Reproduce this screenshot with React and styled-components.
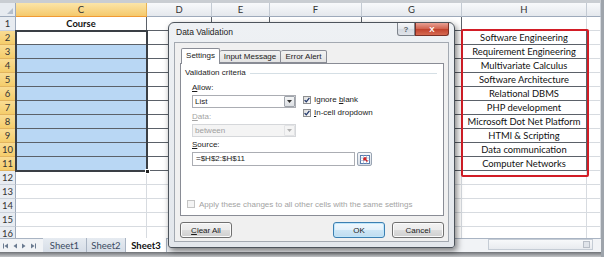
import React from 'react';
import styled, { createGlobalStyle } from 'styled-components';

const GlobalStyle = createGlobalStyle`
  html, body {
    margin: 0;
    padding: 0;
    background: #fff;
  }
  body {
    width: 604px;
    height: 257px;
    overflow: hidden;
  }
`;

const DARK = '#5b6169';
const GRID = '#d7dbe0';
const SHEET_FONT = "Lato, 'Liberation Sans', sans-serif";
const UI_FONT = "'Liberation Sans', Arial, sans-serif";

const COLS = [
  { key: 'C', w: 131 },
  { key: 'D', w: 65 },
  { key: 'E', w: 58 },
  { key: 'F', w: 92 },
  { key: 'G', w: 100 },
  { key: 'H', w: 125 },
  { key: 'I', w: 14 },
];

const COURSES = [
  'Software Engineering',
  'Requirement Engineering',
  'Multivariate Calculus',
  'Software Architecture',
  'Relational DBMS',
  'PHP development',
  'Microsoft Dot Net Platform',
  'HTMl & Scripting',
  'Data communication',
  'Computer Networks',
];

const Window = styled.div`
  position: relative;
  width: 604px;
  height: 257px;
  box-sizing: border-box;
  border-right: 3px solid #9ea4ab;
  display: flex;
  flex-direction: column;
  overflow: hidden;
  font-family: ${SHEET_FONT};
`;

const TopStrip = styled.div`
  height: 3px;
  flex: none;
  background: #c9cdd2;
`;

const SheetArea = styled.div`
  height: 235px;
  flex: none;
  overflow: hidden;
`;

const Grid = styled.div`
  display: grid;
  grid-template-columns: 16px ${COLS.map((c) => c.w + 'px').join(' ')};
  grid-auto-rows: 14px;
`;

const Corner = styled.div`
  box-sizing: border-box;
  background: #e7ebf0;
  border-right: 1px solid #9eaabb;
  border-bottom: 1px solid #9eaabb;
  display: flex;
  align-items: flex-end;
  justify-content: flex-end;
  padding: 0 2px 2px 0;
`;

const ColHead = styled.div`
  box-sizing: border-box;
  background: ${(p) =>
    p.$hl ? 'linear-gradient(#fbe5a8, #f5c96c)' : 'linear-gradient(#f8f9fb, #e4e8ed)'};
  border-right: 1px solid ${(p) => (p.$hl ? '#e7b354' : '#c3cad3')};
  border-bottom: 1px solid ${(p) => (p.$hl ? '#f09a35' : '#9eaabb')};
  color: #333;
  font-size: 9.5px;
  line-height: 13px;
  text-align: center;
`;

const RowHead = styled.div`
  box-sizing: border-box;
  background: ${(p) => (p.$hl ? 'linear-gradient(#f9dc93, #f5cd6b)' : '#e8ecf1')};
  border-right: 1px solid ${(p) => (p.$hl ? '#f0a33a' : '#9eaabb')};
  border-bottom: 1px solid ${(p) => (p.$hl ? '#e2b45e' : '#cad1da')};
  color: #333;
  font-size: 9.5px;
  line-height: 13px;
  text-align: center;
`;

const Cell = styled.div`
  box-sizing: border-box;
  background: ${(p) => (p.$fill ? '#b9d7f4' : '#fff')};
  border-right: 1px solid ${(p) => (p.$vDark ? DARK : GRID)};
  border-bottom: 1px solid ${(p) => (p.$hDark ? DARK : GRID)};
  font-weight: ${(p) => (p.$bold ? 700 : 400)};
  color: #111;
  font-size: 9.4px;
  line-height: 13px;
  text-align: center;
  white-space: nowrap;
  overflow: hidden;
`;

const SelectionFrame = styled.div`
  position: absolute;
  left: 15px;
  top: 30px;
  width: 133px;
  height: 142px;
  box-sizing: border-box;
  border: 2px solid #3a3f45;
  pointer-events: none;
`;

const FillHandle = styled.div`
  position: absolute;
  left: 145px;
  top: 169px;
  width: 5px;
  height: 5px;
  box-sizing: border-box;
  background: #222;
  border: 1px solid #fff;
`;

const RedBox = styled.div`
  position: absolute;
  left: 461px;
  top: 29px;
  width: 128px;
  height: 148px;
  box-sizing: border-box;
  border: 2px solid #d21d26;
  border-radius: 2px;
  pointer-events: none;
`;

const TabBar = styled.div`
  height: 14px;
  flex: none;
  box-sizing: border-box;
  display: flex;
  align-items: stretch;
  background: #f1f3f6;
  border-top: 1px solid #a9b4c3;
`;

const NavArrows = styled.div`
  width: 43px;
  display: flex;
  align-items: center;
  padding-left: 3px;
  box-sizing: border-box;
  gap: 3px;
`;

const SheetTab = styled.div`
  width: ${(p) => p.$w}px;
  box-sizing: border-box;
  display: flex;
  align-items: center;
  justify-content: center;
  font-size: 9.5px;
  font-weight: ${(p) => (p.$active ? 700 : 400)};
  color: ${(p) => (p.$active ? '#111' : '#3b4b62')};
  background: ${(p) => (p.$active ? '#fff' : 'linear-gradient(#e6ebf1, #d6dde7)')};
  border-right: 1px solid #a9b4c3;
  margin-top: -1px;
`;

const HScroll = styled.div`
  margin-left: auto;
  margin-right: 8px;
  width: 105px;
  height: 11px;
  box-sizing: border-box;
  border: 1px solid #c5ccd5;
  background: linear-gradient(#f7f8fa, #e8ebef);
  display: flex;
  justify-content: flex-end;
  align-items: center;
  padding-right: 2px;
`;

const Grip = styled.div`
  width: 5px;
  height: 5px;
  border: 1px solid #b8bec7;
  background: #e0e4ea;
`;

const BottomBand = styled.div`
  height: 5px;
  flex: none;
  background: linear-gradient(#6f7276, #c4c6c9);
`;

/* ---------- dialog ---------- */

const Dialog = styled.div`
  position: absolute;
  left: 168px;
  top: 22px;
  width: 287px;
  height: 226px;
  box-sizing: border-box;
  border: 1px solid #4d545c;
  border-radius: 6px 6px 3px 3px;
  background: linear-gradient(#eef1f4, #e3e7ec);
  padding: 0 5px 5px 5px;
  box-shadow: 2px 3px 6px rgba(0, 0, 0, 0.5);
  font-family: ${UI_FONT};
  display: flex;
  flex-direction: column;
`;

const TitleBar = styled.div`
  height: 19px;
  flex: none;
  display: flex;
  align-items: flex-start;
`;

const Title = styled.div`
  padding-left: 2px;
  font-size: 8.5px;
  line-height: 19px;
  color: #1b1b1b;
`;

const CaptionButtons = styled.div`
  margin-left: auto;
  display: flex;
`;

const CapBtn = styled.div`
  width: ${(p) => p.$w}px;
  height: 13px;
  box-sizing: border-box;
  display: flex;
  align-items: center;
  justify-content: center;
  border: 1px solid ${(p) => (p.$close ? '#7a3026' : '#7d838b')};
  border-top: none;
  border-radius: ${(p) => (p.$close ? '0 0 3px 0' : '0 0 0 3px')};
  background: ${(p) =>
    p.$close
      ? 'linear-gradient(#e8a093, #d0604c 50%, #c0412c 51%, #d66a52)'
      : 'linear-gradient(#f5f6f8, #e2e6eb 50%, #d4d9e0 51%, #e0e4ea)'};
  color: ${(p) => (p.$close ? '#fff' : '#5a6068')};
  font-size: 8px;
  font-weight: 700;
`;

const Body = styled.div`
  flex: 1;
  box-sizing: border-box;
  border: 1px solid #a3a9b1;
  background: #f0f0f0;
  padding: 5px 4px 3px 5px;
  display: flex;
  flex-direction: column;
`;

const Tabs = styled.div`
  height: 15px;
  display: flex;
  align-items: flex-end;
  padding-left: 1px;
  position: relative;
  z-index: 1;
`;

const Tab = styled.div`
  width: ${(p) => p.$w}px;
  height: ${(p) => (p.$active ? 16 : 13)}px;
  margin-bottom: ${(p) => (p.$active ? -1 : 0)}px;
  box-sizing: border-box;
  border: 1px solid #898c95;
  border-bottom: ${(p) => (p.$active ? 'none' : '1px solid #898c95')};
  border-left: ${(p) => (p.$first || p.$active ? '1px solid #898c95' : 'none')};
  border-radius: 2px 2px 0 0;
  background: ${(p) => (p.$active ? '#fff' : 'linear-gradient(#f2f2f2, #e3e3e3)')};
  font-size: 8px;
  color: #1b1b1b;
  display: flex;
  align-items: center;
  justify-content: center;
  padding-bottom: ${(p) => (p.$active ? 2 : 0)}px;
`;

const Panel = styled.div`
  height: 153px;
  flex: none;
  box-sizing: border-box;
  border: 1px solid #898c95;
  background: #fff;
  padding: 4px 4px 0 4px;
  display: flex;
  flex-direction: column;
  font-size: 8px;
  color: #1b1b1b;
`;

const GroupTitle = styled.div`
  display: flex;
  align-items: center;
  height: 10px;
  line-height: 10px;
`;

const GroupLine = styled.div`
  flex: 1;
  height: 1px;
  background: #d5dfe5;
  margin: 0 2px 0 4px;
`;

const Indent = styled.div`
  padding-left: 7px;
  display: flex;
  flex-direction: column;
`;

const Label = styled.div`
  height: 10px;
  line-height: 10px;
  margin-top: ${(p) => p.$mt || 0}px;
  color: ${(p) => (p.$disabled ? '#a3a3a3' : '#1b1b1b')};
`;

const FormRow = styled.div`
  display: flex;
  margin-top: 2px;
`;

const LeftCol = styled.div`
  width: 104px;
  display: flex;
  flex-direction: column;
`;

const Combo = styled.div`
  height: 13px;
  margin-top: ${(p) => p.$mt || 0}px;
  box-sizing: border-box;
  border: 1px solid ${(p) => (p.$disabled ? '#d5d7da' : '#abadb3')};
  background: ${(p) => (p.$disabled ? '#f4f4f4' : '#fff')};
  color: ${(p) => (p.$disabled ? '#a0a0a0' : '#1b1b1b')};
  display: flex;
  align-items: center;
  padding-left: 2px;
  line-height: 11px;
`;

const ComboArrow = styled.div`
  margin-left: auto;
  width: 11px;
  height: 11px;
  box-sizing: border-box;
  border: 1px solid ${(p) => (p.$disabled ? '#e2e3e5' : '#9ea3aa')};
  border-radius: 1px;
  background: ${(p) => (p.$disabled ? '#f4f4f4' : 'linear-gradient(#f4f5f6, #dcdfe3)')};
  display: flex;
  align-items: center;
  justify-content: center;
`;

const RightCol = styled.div`
  margin-left: 7px;
  margin-top: -2px;
  display: flex;
  flex-direction: column;
`;

const CheckRow = styled.div`
  height: 13px;
  display: flex;
  align-items: center;
  white-space: pre;
  color: ${(p) => (p.$disabled ? '#a3a3a3' : '#1b1b1b')};
`;

const Box = styled.div`
  width: 8px;
  height: 8px;
  flex: none;
  box-sizing: border-box;
  border: 1px solid ${(p) => (p.$disabled ? '#c4c4c4' : '#8e8f8f')};
  background: ${(p) => (p.$disabled ? '#f4f4f4' : 'linear-gradient(135deg, #dcdcdc, #fbfbfb)')};
  margin-right: ${(p) => p.$gap || 3}px;
  display: flex;
  align-items: center;
  justify-content: center;
`;

const SourceRow = styled.div`
  display: flex;
  margin-top: 2px;
  align-items: flex-start;
`;

const SourceInput = styled.div`
  width: 163px;
  height: 14px;
  box-sizing: border-box;
  border: 1px solid #abadb3;
  background: #fff;
  padding-left: 3px;
  line-height: 12px;
`;

const RefButton = styled.div`
  margin-left: 2px;
  width: 15px;
  height: 14px;
  box-sizing: border-box;
  border: 1px solid #9aa5b3;
  border-radius: 2px;
  background: linear-gradient(#f5f7fa, #d8dee6);
  display: flex;
  align-items: center;
  justify-content: center;
`;

const ApplyRow = styled(CheckRow)`
  margin-top: auto;
  margin-bottom: 5px;
  padding-left: 2px;
  height: 12px;
`;

const ButtonRow = styled.div`
  margin-top: 6px;
  height: 16px;
  display: flex;
`;

const RightButtons = styled.div`
  margin-left: auto;
  display: flex;
  gap: 7px;
`;

const Button = styled.div`
  width: 52px;
  height: 16px;
  box-sizing: border-box;
  border: 1px solid ${(p) => (p.$default ? '#3c7fb1' : '#707070')};
  border-radius: 3px;
  background: ${(p) =>
    p.$default
      ? 'linear-gradient(#f1f8fd, #e3f1fb 50%, #cde6f6 51%, #bfdcef)'
      : 'linear-gradient(#f2f2f2, #ebebeb 50%, #dddddd 51%, #cfcfcf)'};
  box-shadow: ${(p) => (p.$default ? 'inset 0 0 0 1px #bfe6fb' : 'inset 0 0 0 1px #fbfbfb')};
  display: flex;
  align-items: center;
  justify-content: center;
  font-size: 8px;
  color: #1b1b1b;
`;

const U = styled.span`
  text-decoration: underline;
`;

const Tick = () => (
  <svg width="6" height="6" viewBox="0 0 6 6">
    <path d="M0.6 3.1 L2.3 4.8 L5.4 0.9" fill="none" stroke="#21386b" strokeWidth="1.3" />
  </svg>
);

const DownArrow = ({ color }) => (
  <svg width="5" height="3" viewBox="0 0 5 3">
    <path d="M0 0 H5 L2.5 3 Z" fill={color} />
  </svg>
);

const NavIcon = ({ dir, bar }) => (
  <svg width="6" height="6" viewBox="0 0 6 6">
    {dir === 'left' ? (
      <path d="M5 0.5 V5.5 L1.5 3 Z" fill="#6a7a90" />
    ) : (
      <path d="M1 0.5 V5.5 L4.5 3 Z" fill="#6a7a90" />
    )}
    {bar && dir === 'left' && <rect x="0" y="0.5" width="1" height="5" fill="#6a7a90" />}
    {bar && dir === 'right' && <rect x="5" y="0.5" width="1" height="5" fill="#6a7a90" />}
  </svg>
);

const RefIcon = () => (
  <svg width="10" height="9" viewBox="0 0 10 9">
    <rect x="0.5" y="0.5" width="9" height="8" fill="#fff" stroke="#5a7cad" />
    <path d="M0.5 3 H9.5 M0.5 5.5 H9.5 M3.5 0.5 V8.5 M6.5 0.5 V8.5" stroke="#9fb4d2" strokeWidth="0.7" />
    <path d="M4 3 L7.5 6.5 M4 3 L4 5.5 M4 3 L6.5 3" stroke="#d42020" strokeWidth="1.4" fill="none" />
  </svg>
);

const CornerMark = () => (
  <svg width="6" height="6" viewBox="0 0 6 6">
    <path d="M6 0 V6 H0 Z" fill="#b5bfcc" />
  </svg>
);

function cellProps(row, col) {
  const tableCol = ['C', 'D', 'E', 'F', 'G'].includes(col);
  const inTable = (tableCol && row >= 1 && row <= 11) || (col === 'H' && row >= 2 && row <= 11);
  return {
    $fill: col === 'C' && row >= 3 && row <= 11,
    $hDark: inTable,
    $vDark: inTable,
  };
}

function cellText(row, col) {
  if (row === 1 && col === 'C') return 'Course';
  if (col === 'H' && row >= 2 && row <= 11) return COURSES[row - 2];
  return '';
}

const Sheet = () => {
  const rows = Array.from({ length: 16 }, (_, i) => i + 1);
  return (
    <SheetArea>
      <Grid>
        <Corner>
          <CornerMark />
        </Corner>
        {COLS.map((c) => (
          <ColHead key={c.key} $hl={c.key === 'C'}>
            {c.key === 'I' ? '' : c.key}
          </ColHead>
        ))}
        {rows.map((r) => (
          <React.Fragment key={r}>
            <RowHead $hl={r >= 2 && r <= 11}>{r}</RowHead>
            {COLS.map((c) => (
              <Cell key={c.key} {...cellProps(r, c.key)} $bold={r === 1}>
                {cellText(r, c.key)}
              </Cell>
            ))}
          </React.Fragment>
        ))}
      </Grid>
    </SheetArea>
  );
};

const DataValidationDialog = () => (
  <Dialog>
    <TitleBar>
      <Title>Data Validation</Title>
      <CaptionButtons>
        <CapBtn $w={18}>?</CapBtn>
        <CapBtn $w={34} $close>
          X
        </CapBtn>
      </CaptionButtons>
    </TitleBar>
    <Body>
      <Tabs>
        <Tab $w={39} $active>
          Settings
        </Tab>
        <Tab $w={61}>Input Message</Tab>
        <Tab $w={46}>Error Alert</Tab>
      </Tabs>
      <Panel>
        <GroupTitle>
          Validation criteria
          <GroupLine />
        </GroupTitle>
        <Indent>
          <Label $mt={5}>
            <U>A</U>llow:
          </Label>
          <FormRow>
            <LeftCol>
              <Combo>
                List
                <ComboArrow>
                  <DownArrow color="#333" />
                </ComboArrow>
              </Combo>
              <Label $mt={4} $disabled>
                <U>D</U>ata:
              </Label>
              <Combo $mt={2} $disabled>
                between
                <ComboArrow $disabled>
                  <DownArrow color="#b0b0b0" />
                </ComboArrow>
              </Combo>
            </LeftCol>
            <RightCol>
              <CheckRow>
                <Box>
                  <Tick />
                </Box>
                <span>
                  Ignore <U>b</U>lank
                </span>
              </CheckRow>
              <CheckRow>
                <Box>
                  <Tick />
                </Box>
                <span>
                  <U>I</U>n-cell dropdown
                </span>
              </CheckRow>
            </RightCol>
          </FormRow>
          <Label $mt={3}>
            <U>S</U>ource:
          </Label>
          <SourceRow>
            <SourceInput>=$H$2:$H$11</SourceInput>
            <RefButton>
              <RefIcon />
            </RefButton>
          </SourceRow>
        </Indent>
        <ApplyRow $disabled>
          <Box $disabled $gap={4} />
          <span>Apply these changes to all other cells with the same settings</span>
        </ApplyRow>
      </Panel>
      <ButtonRow>
        <Button>
          <U>C</U>lear All
        </Button>
        <RightButtons>
          <Button $default>OK</Button>
          <Button>Cancel</Button>
        </RightButtons>
      </ButtonRow>
    </Body>
  </Dialog>
);

export default function App() {
  return (
    <>
      <GlobalStyle />
      <Window>
        <TopStrip />
        <Sheet />
        <TabBar>
          <NavArrows>
            <NavIcon dir="left" bar />
            <NavIcon dir="left" />
            <NavIcon dir="right" />
            <NavIcon dir="right" bar />
          </NavArrows>
          <SheetTab $w={44}>Sheet1</SheetTab>
          <SheetTab $w={39}>Sheet2</SheetTab>
          <SheetTab $w={41} $active>
            Sheet3
          </SheetTab>
          <HScroll>
            <Grip />
          </HScroll>
        </TabBar>
        <BottomBand />
        <SelectionFrame />
        <FillHandle />
        <RedBox />
        <DataValidationDialog />
      </Window>
    </>
  );
}
